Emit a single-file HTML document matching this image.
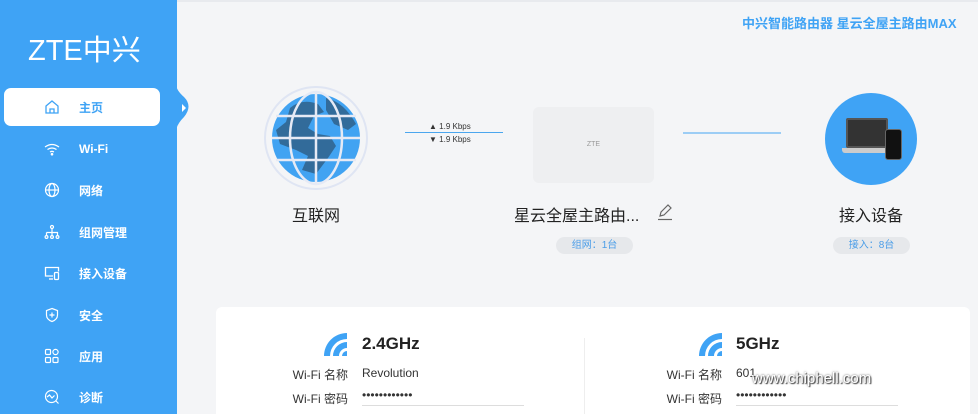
<!DOCTYPE html>
<html><head><meta charset="utf-8"><style>
*{margin:0;padding:0;box-sizing:border-box}
html,body{width:978px;height:414px;overflow:hidden}
body{background:#f4f5f7;font-family:"Liberation Sans","Noto Sans CJK SC",sans-serif;position:relative}
.abs{position:absolute}
#side{left:0;top:0;width:177px;height:414px;background:#3fa3f5}
.logo{left:28px;top:27px;color:#fff;font-size:29px;font-weight:normal;letter-spacing:0px}
.item{left:4px;width:156px;height:38px;display:flex;align-items:center;color:#fff;font-size:12px;font-weight:bold}
.item svg{position:absolute;left:40px}
.item span{position:absolute;left:75px}
.act{background:#fff;border-radius:7px;color:#3fa3f5}
.lbl{font-size:16px;color:#222;text-align:center}
.pill{height:17px;border-radius:9px;background:#e6e8eb;color:#4a9de8;font-size:10px;text-align:center;line-height:17px}
.card{left:216px;top:307px;width:754px;height:107px;background:#fff;border-radius:6px 6px 0 0}
.k{font-size:12px;color:#333;text-align:right;width:80px}
.v{font-size:12px;color:#333}
</style></head><body>
<div class="abs" style="left:0;top:0;width:978px;height:2px;background:#e8eaee"></div>
<div id="side" class="abs">
<div class="abs logo">ZTE中兴</div>
<div class="abs item act" style="top:88px"><svg width="16" height="16" viewBox="0 0 16 16" fill="none" stroke="#3fa3f5" stroke-width="1.3"><path d="M2 7L8 2l6 5v7H2z"/><path d="M6 14v-4h4v4"/></svg><span>主页</span></div>
<div class="abs item" style="top:130px"><svg width="16" height="16" viewBox="0 0 16 16" fill="none" stroke="#fff" stroke-width="1.2"><path d="M1 6q7-5 14 0M3.5 8.5q4.5-3 9 0M6 11q2-1.2 4 0"/><circle cx="8" cy="13.2" r=".7" fill="#fff"/></svg><span>Wi-Fi</span></div>
<div class="abs item" style="top:171px"><svg width="16" height="16" viewBox="0 0 16 16" fill="none" stroke="#fff" stroke-width="1.2"><circle cx="8" cy="8" r="6.5"/><ellipse cx="8" cy="8" rx="3" ry="6.5"/><path d="M1.5 8h13"/></svg><span>网络</span></div>
<div class="abs item" style="top:213px"><svg width="16" height="16" viewBox="0 0 16 16" fill="none" stroke="#fff" stroke-width="1.2"><circle cx="8" cy="3" r="1.5"/><path d="M8 4.5v4M2.5 8.5h11v3M8 8.5v3M2.5 8.5v3"/><circle cx="2.5" cy="13" r="1.4"/><circle cx="8" cy="13" r="1.4"/><circle cx="13.5" cy="13" r="1.4"/></svg><span>组网管理</span></div>
<div class="abs item" style="top:254px"><svg width="16" height="16" viewBox="0 0 16 16" fill="none" stroke="#fff" stroke-width="1.3"><path d="M9 11H1.5V2.5h13v4"/><path d="M5 14h4"/><rect x="10.5" y="7.5" width="4" height="7" rx="1"/></svg><span>接入设备</span></div>
<div class="abs item" style="top:296px"><svg width="16" height="16" viewBox="0 0 16 16" fill="none" stroke="#fff" stroke-width="1.2"><path d="M8 1.5l5.5 2v4.5q0 4.5-5.5 6.5Q2.5 12.5 2.5 8V3.5z"/><path d="M8 5.5v5M5.5 8h5"/></svg><span>安全</span></div>
<div class="abs item" style="top:337px"><svg width="16" height="16" viewBox="0 0 16 16" fill="none" stroke="#fff" stroke-width="1.2"><rect x="1.5" y="1.5" width="5" height="5" rx="1"/><circle cx="11.5" cy="4" r="2.6"/><rect x="1.5" y="9.5" width="5" height="5" rx="1"/><rect x="9" y="9.5" width="5" height="5" rx="1"/></svg><span>应用</span></div>
<div class="abs item" style="top:378px"><svg width="16" height="16" viewBox="0 0 16 16" fill="none" stroke="#fff" stroke-width="1.2"><circle cx="7.5" cy="7.5" r="6"/><path d="M3 8l2.5-2 2.5 3 2.5-2.5M12 12l2.5 2.5"/></svg><span>诊断</span></div>
</div>
<svg class="abs" style="left:176px;top:84px" width="18" height="48" viewBox="0 0 18 48"><path d="M0 0q0 6 8 13q9 9 0 20q-8 8-8 15z" fill="#3fa3f5"/><path d="M6 20l4 4-4 4z" fill="#fff"/></svg>
<div class="abs" style="left:742px;top:13px;font-size:13px;font-weight:bold;color:#3fa3f5">中兴智能路由器 星云全屋主路由MAX</div>

<svg class="abs" style="left:264px;top:86px" width="104" height="104" viewBox="0 0 104 104">
<circle cx="52" cy="52" r="51" fill="none" stroke="#dfe5f3" stroke-width="2"/>
<circle cx="52" cy="52" r="44" fill="#41a3f2"/>
<path d="M26 22q12-10 28-4l6 8-10 4-6 12 10 6 12 2 6 10-8 12-12 16-14-4 6-14-12-6-16-6-4-14 10-8z" fill="#326b9a"/>
<path d="M62 12q18 4 30 26l-8 6-14-6-8-14z" fill="#326b9a"/>
<path d="M8 52h88M12 30h80M12 74h80M52 6v92" stroke="#e6eaf5" stroke-width="2.5" fill="none"/>
<ellipse cx="52" cy="52" rx="26" ry="46" stroke="#e6eaf5" stroke-width="2.5" fill="none"/>
</svg>
<div class="abs" style="left:405px;top:132px;width:98px;height:1px;background:#4ba6ee"></div>
<div class="abs" style="left:429px;top:122px;font-size:8px;color:#333">▲ 1.9 Kbps</div>
<div class="abs" style="left:429px;top:135px;font-size:8px;color:#333">▼ 1.9 Kbps</div>
<div class="abs" style="left:533px;top:107px;width:121px;height:76px;background:#eeeff1;border-radius:6px;font-size:7px;color:#999;text-align:center;line-height:76px">ZTE</div>
<div class="abs" style="left:683px;top:132px;width:98px;height:2px;background:#9ccdf5"></div>
<div class="abs" style="left:825px;top:93px;width:92px;height:92px;border-radius:50%;background:#3fa3f5"></div>
<div class="abs" style="left:846px;top:118px;width:42px;height:30px;background:#333;border:2px solid #555;border-radius:2px"></div>
<div class="abs" style="left:842px;top:148px;width:50px;height:5px;background:#ccc;border-radius:0 0 3px 3px"></div>
<div class="abs" style="left:885px;top:129px;width:17px;height:31px;background:#111;border-radius:3px;border:1px solid #666"></div>

<div class="abs lbl" style="left:266px;top:202px;width:100px">互联网</div>
<div class="abs lbl" style="left:514px;top:202px">星云全屋主路由...</div>
<svg class="abs" style="left:656px;top:203px" width="18" height="18" viewBox="0 0 18 18" fill="none" stroke="#666" stroke-width="1.2"><path d="M4 13l1-4 7-7 3 3-7 7z"/><path d="M2 16.5h14"/></svg>
<div class="abs lbl" style="left:821px;top:202px;width:100px">接入设备</div>
<div class="abs pill" style="left:556px;top:237px;width:77px">组网：1台</div>
<div class="abs pill" style="left:833px;top:237px;width:77px">接入：8台</div>

<div class="abs card"></div>
<div class="abs" style="left:584px;top:338px;width:1px;height:80px;background:#eee"></div>
<svg class="abs" style="left:322px;top:331px" width="26" height="25" viewBox="0 0 26 25"><path d="M2 25A23 23 0 0 1 25 2v6A17 17 0 0 0 8 25z" fill="#3fa3f5"/><path d="M11 25A14 14 0 0 1 25 11v6A8 8 0 0 0 17 25z" fill="#3fa3f5"/><path d="M20 25a5 5 0 0 1 5-5v5z" fill="#3fa3f5"/></svg>
<div class="abs" style="left:362px;top:334px;font-size:17px;font-weight:bold;color:#222">2.4GHz</div>
<div class="abs k" style="left:268px;top:366px">Wi-Fi 名称</div>
<div class="abs v" style="left:362px;top:366px">Revolution</div>
<div class="abs k" style="left:268px;top:390px">Wi-Fi 密码</div>
<div class="abs v" style="left:362px;top:388px">••••••••••••</div>
<div class="abs" style="left:362px;top:405px;width:162px;height:1px;background:#ddd"></div>
<svg class="abs" style="left:697px;top:331px" width="26" height="25" viewBox="0 0 26 25"><path d="M2 25A23 23 0 0 1 25 2v6A17 17 0 0 0 8 25z" fill="#3fa3f5"/><path d="M11 25A14 14 0 0 1 25 11v6A8 8 0 0 0 17 25z" fill="#3fa3f5"/><path d="M20 25a5 5 0 0 1 5-5v5z" fill="#3fa3f5"/></svg>
<div class="abs" style="left:736px;top:334px;font-size:17px;font-weight:bold;color:#222">5GHz</div>
<div class="abs k" style="left:642px;top:366px">Wi-Fi 名称</div>
<div class="abs v" style="left:736px;top:366px">601</div>
<div class="abs k" style="left:642px;top:390px">Wi-Fi 密码</div>
<div class="abs v" style="left:736px;top:388px">••••••••••••</div>
<div class="abs" style="left:736px;top:405px;width:162px;height:1px;background:#ddd"></div>
<div class="abs" style="left:752px;top:370px;font-size:15px;color:#fff;text-shadow:0 0 2px #555,1px 1px 1px #333">www.chiphell.com</div>
</body></html>
